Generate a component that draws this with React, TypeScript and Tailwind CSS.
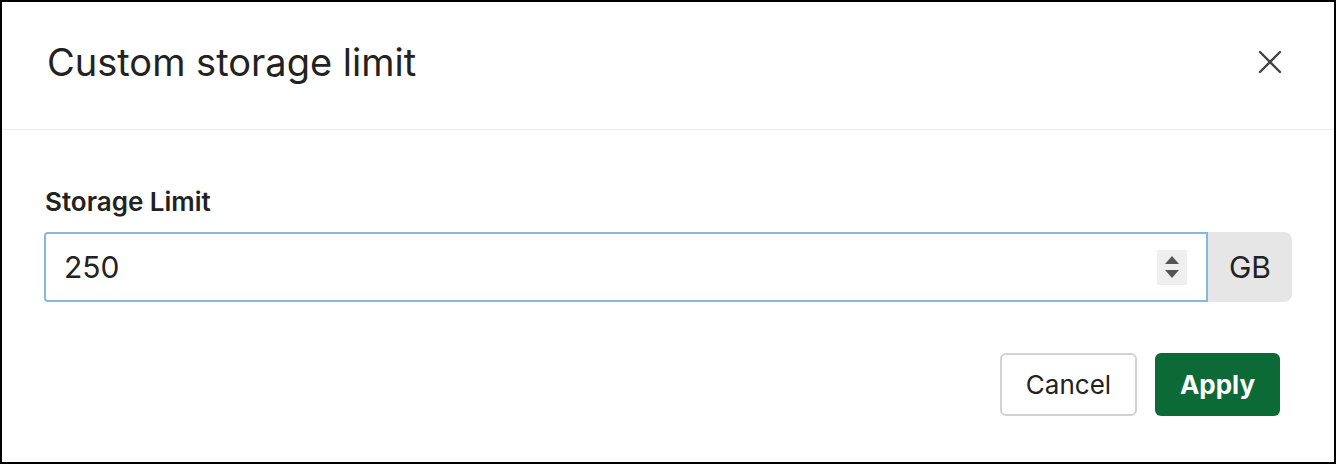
import { useState } from "react";

const CloseIcon = () => (
  <svg width="24" height="24" viewBox="0 0 24 24" fill="none">
    <path d="M2 2L22 22M22 2L2 22" stroke="#444" strokeWidth="2.4" strokeLinecap="round" />
  </svg>
);

const Spinner = () => (
  <div className="w-[30px] h-[35px] bg-[#efefef] flex flex-col items-center justify-center gap-[6px]">
    <svg width="14" height="8" viewBox="0 0 14 8">
      <path d="M7 0L14 8H0Z" fill="#555" />
    </svg>
    <svg width="14" height="8" viewBox="0 0 14 8">
      <path d="M0 0H14L7 8Z" fill="#555" />
    </svg>
  </div>
);

const App = () => {
  const [limit, setLimit] = useState("250");
  return (
    <div className="w-[1336px] h-[464px] border-2 border-black bg-white flex flex-col font-['Inter',sans-serif] text-[#222]">
      <div className="h-[128px] flex items-center justify-between pl-[45px] pr-[52px] pb-[8px] border-b border-[#ececec]">
        <div className="text-[38px] leading-[46px]">Custom storage limit</div>
        <button className="outline-none">
          <CloseIcon />
        </button>
      </div>

      <div className="flex flex-col pl-[42px] pr-[42px] pt-[56px]">
        <div className="text-[26px] leading-[32px] font-semibold pl-[1px]">Storage Limit</div>
        <div className="flex h-[70px] mt-[14px]">
          <div className="flex-1 flex items-center border-2 border-[#86b8dc] rounded-l-[4px] pl-[18px] pr-[19px]">
            <input
              type="text"
              value={limit}
              onChange={(e) => setLimit(e.target.value)}
              className="flex-1 text-[30px] outline-none bg-transparent"
            />
            <Spinner />
          </div>
          <div className="w-[84px] bg-[#e6e6e6] rounded-r-[8px] flex items-center justify-center text-[30px]">
            GB
          </div>
        </div>
      </div>

      <div className="flex justify-end gap-[18px] pr-[54px] mt-[51px]">
        <button className="w-[137px] h-[63px] border-2 border-[#d2d2d2] rounded-[6px] text-[26px]">
          Cancel
        </button>
        <button className="w-[125px] h-[63px] bg-[#0c6a37] rounded-[6px] text-[26px] font-bold text-white">
          Apply
        </button>
      </div>
    </div>
  );
};

export default App;
